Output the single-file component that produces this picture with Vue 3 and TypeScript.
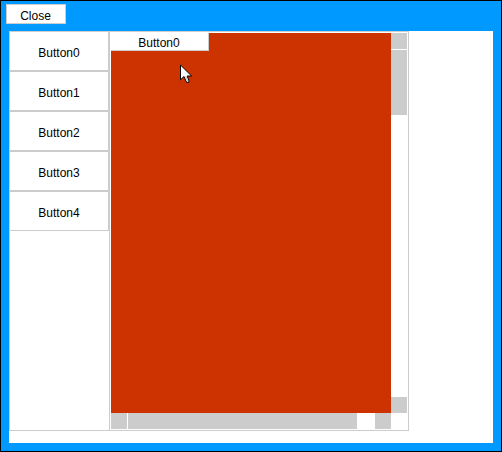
<script setup lang="ts">
import { ref } from 'vue'

const items: string[] = ['Button0', 'Button1', 'Button2', 'Button3', 'Button4']
const selected = ref<string>(items[0])
</script>

<template>
  <div class="window">
    <header class="bar">
      <button class="close">Close</button>
    </header>
    <main class="body">
      <nav class="menu">
        <button v-for="item in items" :key="item" class="item" @click="selected = item">{{ item }}</button>
      </nav>
      <section class="pane">
        <div class="view">
          <div class="tab">{{ selected }}</div>
        </div>
        <div class="vbar">
          <i class="arrow"></i>
          <i class="vthumb"></i>
          <i class="arrow end"></i>
        </div>
        <div class="hbar">
          <i class="arrow"></i>
          <i class="hthumb"></i>
          <i class="arrow end"></i>
        </div>
      </section>
    </main>
    <svg class="pointer" width="13" height="20" viewBox="0 0 13 20">
      <path d="M.5 1V15.8L4 12.5L6.5 18.3H8.8V16.5L7.2 12H11.6Z" fill="#fff" stroke="#000" />
      <path d="M5 12.5L7 17.5H8.3L6.3 12Z" fill="#ccc" />
    </svg>
  </div>
</template>

<style>
body {
  margin: 0;
}
</style>

<style scoped>
.window {
  position: relative;
  box-sizing: border-box;
  width: 502px;
  height: 452px;
  border: 1px solid #000;
  padding: 3px 8px 8px;
  background: #0099ff;
  font: 12px/14px "Liberation Sans", Arial, sans-serif;
  color: #000;
}
button {
  display: block;
  box-sizing: border-box;
  margin: 0;
  padding: 0;
  border: 1px solid #ccc;
  border-radius: 0;
  background: #fff;
  color: inherit;
  font: inherit;
  text-align: center;
}
.bar {
  height: 27px;
}
.close {
  width: 60px;
  height: 20px;
  margin-left: -3px;
  padding: 4px 1px 0 0;
}
.body {
  display: flex;
  align-items: flex-start;
  height: 412px;
  background: #fff;
}
.menu {
  width: 100px;
  height: 400px;
  box-shadow: inset 1px 1px #ccc, inset 0 -1px #ccc;
}
.item {
  width: 100px;
  height: 40px;
  padding-top: 4px;
}
.pane {
  display: grid;
  grid-template: 380px 16px / 280px 16px;
  padding: 1px;
  border: 1px solid #ccc;
}
.view {
  background: #cc3300;
}
.tab {
  box-sizing: border-box;
  width: 98px;
  height: 18px;
  padding: 3px 1px 0 0;
  border: solid #ccc;
  border-width: 0 1px 1px 0;
  background: #fff;
  text-align: center;
}
.vbar,
.hbar {
  display: flex;
  gap: 1px;
}
.vbar {
  flex-direction: column;
}
.arrow {
  width: 16px;
  height: 16px;
  background: #ccc;
}
.vthumb {
  height: 65px;
  background: #ccc;
}
.hthumb {
  width: 229px;
  background: #ccc;
}
.vbar .end {
  margin-top: auto;
}
.hbar .end {
  margin-left: auto;
}
.pointer {
  position: absolute;
  left: 179px;
  top: 63px;
}
</style>
